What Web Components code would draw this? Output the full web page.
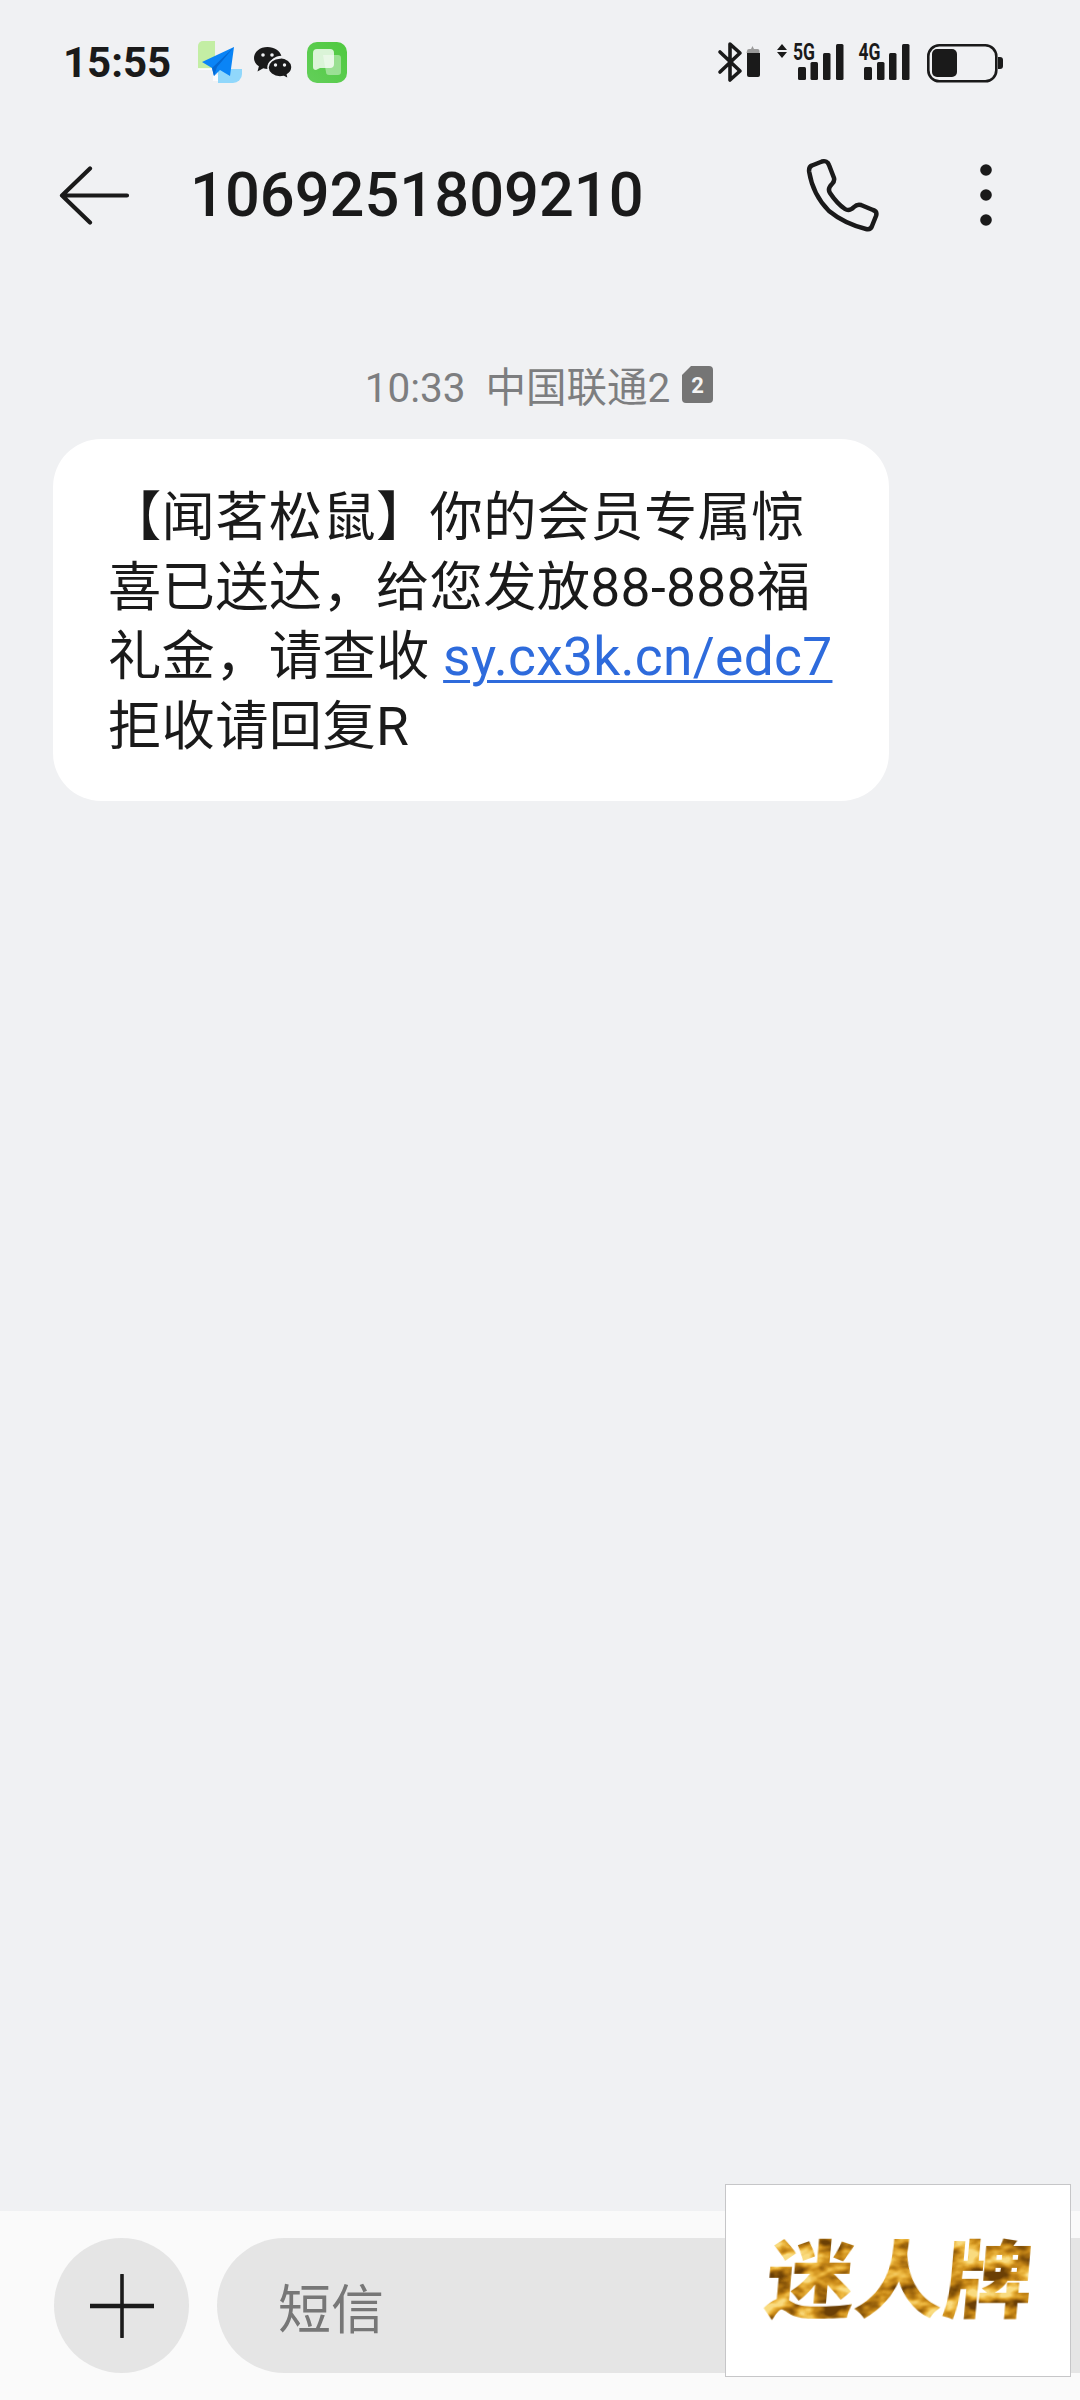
<!DOCTYPE html>
<html lang="zh-CN">
<head>
<meta charset="utf-8">
<title>短信</title>
<style>
  html, body { margin: 0; padding: 0; }
  body {
    width: 1080px;
    height: 2400px;
    overflow: hidden;
    background: #f0f1f3;
    color: #1a1a1a;
    font-family: Roboto, "Noto Sans CJK SC", sans-serif;
  }
</style>
</head>
<body>
<sms-screen>
  <status-bar slot="status" time="15:55"></status-bar>
  <app-bar slot="bar">1069251809210</app-bar>
  <sms-meta slot="thread">10:33&nbsp;&nbsp;中国联通2</sms-meta>
  <sms-bubble slot="thread">【闻茗松鼠】你的会员专属惊<br>喜已送达，给您发放88-888福<br>礼金，请查收 <sms-link>sy.cx3k.cn/edc7</sms-link><br>拒收请回复R</sms-bubble>
  <compose-bar slot="compose" placeholder="短信"></compose-bar>
  <ad-badge slot="overlay">迷人牌</ad-badge>
</sms-screen>

<script>
// page frame
class SmsScreen extends HTMLElement{
    constructor(){
        super();
        this.attachShadow({mode:'open'});
        this.shadowRoot.innerHTML = `
        <style>
            :host{ display:flex; flex-direction:column; position:relative; width:1080px; height:2400px; }
            .thread{ flex:1; display:flex; flex-direction:column; padding-top:94px; }
        </style>
        <slot name="status"></slot>
        <slot name="bar"></slot>
        <div class="thread"><slot name="thread"></slot></div>
        <slot name="compose"></slot>
        <slot name="overlay"></slot>`;
    }
}

class StatusBar extends HTMLElement{
    constructor(){
        super();
        this.attachShadow({mode:'open'});
        this.shadowRoot.innerHTML = `
        <style>
            :host{ display:flex; align-items:center; height:124px; padding:0 75px 0 63px; box-sizing:border-box; }
            .time{ font:700 42px Roboto, sans-serif; width:135px; color:#1a1a1a; }
            svg{ display:block; flex:none; }
            .plane{ margin-right:12px; }
            .wechat{ margin-right:15px; }
            .right{ margin-left:auto; }
            text{ font:700 23px Roboto, sans-serif; fill:#1a1a1a; }
        </style>
        <span class="time">${this.getAttribute('time')}</span>

        <!-- paper plane app -->
        <svg class="plane" width="44" height="42" viewBox="0 0 44 42">
            <path d="M0 5a5 5 0 015-5h12v28H0z" fill="#c3eea4"/>
            <path d="M20 28h24v5a9 9 0 01-9 9H20z" fill="#90d7fb"/>
            <path d="M0 27h15v2H0zM15 34h5v6h-5z" fill="#fff" opacity=".8"/>
            <path d="M36 6L4 21l10 6 2 8 6-6 10 6z" fill="#0a84f6"/>
            <path d="M36 6L14 27l2 8 3-9z" fill="#0568d2"/>
        </svg>

        <svg class="wechat" width="38" height="31" viewBox="0 0 38 31">
            <path d="M13.500 0C6 0 0 4.900 0 11c0 3.400 1.900 6.300 4.900 8.300L3.500 24.500l5.800-3.200c1.300.4 2.700.6 4.200.6 1 0 1.900-.1 2.800-.3-.3-1-.5-2-.5-3 0-5.500 5.300-9.800 11.600-9.800C25.900 3.700 20.300 0 13.500 0z" fill="#1a1a1a"/>
            <path d="M26 11c-6.600 0-12 4.300-12 9.500S19.400 30 26 30c1.300 0 2.600-.2 3.800-.5l4.700 2.500-1.100-4.300c2.800-1.800 4.600-4.500 4.600-7.700 0-5.200-5.400-9.500-12-9.500z" fill="#1a1a1a" stroke="#f0f1f3" stroke-width="1.500"/>
            <circle cx="9" cy="8" r="1.800" fill="#f0f1f3"/><circle cx="18" cy="8" r="1.800" fill="#f0f1f3"/>
            <circle cx="21.500" cy="18" r="1.700" fill="#f0f1f3"/><circle cx="30.500" cy="18" r="1.700" fill="#f0f1f3"/>
        </svg>

        <svg width="40" height="41" viewBox="0 0 40 41">
            <defs><linearGradient id="msg" x1="1" y1="0" x2="0" y2="1"><stop offset="0" stop-color="#4fc93f"/><stop offset="1" stop-color="#63cf5a"/></linearGradient></defs>
            <rect width="40" height="41" rx="10" fill="url(#msg)"/>
            <path d="M16 13h15a3 3 0 013 3v14a3 3 0 01-3 3h-3l-6 0a3 3 0 01-3-3z" fill="#fff" opacity=".4"/>
            <path d="M10 7h13a4 4 0 014 4v11a4 4 0 01-4 4H13l-4 2a3 3 0 01-3-3V11a4 4 0 014-4z" fill="#fff" opacity=".78"/>
        </svg>

        <svg class="right" width="290" height="44" viewBox="715 40 290 44">
            <!-- bluetooth -->
            <path d="M720 52l20 19-10 9V44l10 9-20 19" fill="none" stroke="#1a1a1a" stroke-width="3.600" stroke-linejoin="round" stroke-linecap="round"/>
            <!-- little battery of the headset -->
            <path d="M747 51a2 2 0 012-2h2l1.500-3 1.500 3h3.500a2 2 0 012 2v2h-13z" fill="#9a9a9a"/>
            <path d="M747 53h13v22a2 2 0 01-2 2h-9a2 2 0 01-2-2z" fill="#1a1a1a"/>
            <!-- data arrows -->
            <path d="M782 44l5 6h-10zM782 58l5-6h-10z" fill="#1a1a1a"/>
            <text x="793" y="59.500" textLength="22" lengthAdjust="spacingAndGlyphs">5G</text>
            <rect x="798" y="67" width="8" height="13" rx="1.500" fill="#1a1a1a"/>
            <rect x="810.500" y="62" width="7.500" height="18" rx="1.500" fill="#1a1a1a"/>
            <rect x="823" y="53" width="7.500" height="27" rx="1.500" fill="#1a1a1a"/>
            <rect x="836" y="44" width="7.500" height="36" rx="1.500" fill="#1a1a1a"/>
            <text x="858.500" y="59.500" textLength="22" lengthAdjust="spacingAndGlyphs">4G</text>
            <rect x="864" y="67" width="8" height="13" rx="1.500" fill="#1a1a1a"/>
            <rect x="877" y="62" width="7.500" height="18" rx="1.500" fill="#1a1a1a"/>
            <rect x="889" y="53" width="7.500" height="27" rx="1.500" fill="#1a1a1a"/>
            <rect x="902" y="44" width="7.500" height="36" rx="1.500" fill="#1a1a1a"/>
            <!-- battery -->
            <rect x="928.300" y="45.300" width="68" height="36" rx="11" fill="none" stroke="#1a1a1a" stroke-width="2.600"/>
            <rect x="932" y="49" width="25" height="28" rx="5" fill="#1a1a1a"/>
            <path d="M998 57h2a3 3 0 013 3v6a3 3 0 01-3 3h-2z" fill="#1a1a1a"/>
        </svg>`;
    }
}

class AppBar extends HTMLElement{
    constructor(){
        super();
        this.attachShadow({mode:'open'});
        this.shadowRoot.innerHTML = `
        <style>
            :host{ display:flex; align-items:center; height:142px; padding:0 88px 0 58px; box-sizing:border-box; }
            .title{ font:500 61.400px Roboto, sans-serif; color:#1a1a1a; margin-left:59px; }
            .phone{ margin-left:auto; margin-right:100px; }
            svg{ display:block; flex:none; }
        </style>
        <svg width="73" height="59" viewBox="0 0 73 59" fill="none" stroke="#1a1a1a" stroke-width="4.200" stroke-linecap="round" stroke-linejoin="round">
            <path d="M32 2.500L4 29.500 32 56.500M4 29.500H69"/>
        </svg>
        <div class="title"><slot></slot></div>
        <svg class="phone" width="75" height="76" viewBox="-2 -2 75 76" fill="none" stroke="#1a1a1a" stroke-width="4.500" stroke-linejoin="round">
            <path d="M15 2.500L5 6.500C2 7.500 1.800 10 2.200 13C5 30 12 42 22 52C33 61 43 66 59 70C62 70.700 64 70 65 67L69 57C70 54 69 52 66 51L54 46C51 45 49 46 47 48C44 51 41 52 38 50C32 46 27 40 23 34C21 31 22 28 25 25C27 23 27.500 21 27 19L22 6C21 3 18 1.500 15 2.500Z"/>
        </svg>
        <svg width="12" height="62" viewBox="0 0 12 62" fill="#1a1a1a">
            <circle cx="6" cy="6" r="5.800"/><circle cx="6" cy="31" r="5.800"/><circle cx="6" cy="56" r="5.800"/>
        </svg>`;
    }
}

class SmsMeta extends HTMLElement{
    constructor(){
        super();
        this.attachShadow({mode:'open'});
        this.shadowRoot.innerHTML = `
        <style>
            :host{ display:flex; justify-content:center; align-items:center; gap:12px; height:48px; padding-right:2px; font:400 40.500px Roboto, "Noto Sans CJK SC", sans-serif; color:#7d7e80; }
            svg{ display:block; }
            text{ font:700 22px Roboto, sans-serif; fill:#f4f4f4; }
        </style>
        <span><slot></slot></span>
        <svg width="31" height="37" viewBox="0 0 31 37">
            <path d="M9 0h18a4 4 0 014 4v29a4 4 0 01-4 4H4a4 4 0 01-4-4V9z" fill="#757575"/>
            <text x="15.500" y="27" text-anchor="middle">2</text>
        </svg>`;
    }
}

class SmsBubble extends HTMLElement{
    constructor(){
        super();
        this.attachShadow({mode:'open'});
        this.shadowRoot.innerHTML = `
        <style>
            :host{ display:block; box-sizing:border-box; width:836px; height:362px; margin:31px 0 0 53px; padding:45px 0 0 55px; background:#fff; border-radius:48px; font:400 53.300px/69.500px Roboto, "Noto Sans CJK SC", sans-serif; letter-spacing:.3px; color:#1a1a1a; white-space:nowrap; }
        </style>
        <slot></slot>`;
    }
}

class SmsLink extends HTMLElement{
    constructor(){
        super();
        this.attachShadow({mode:'open'});
        this.shadowRoot.innerHTML = `
        <style>
            :host{ display:inline; color:#2e6bdc; text-decoration:underline; text-decoration-thickness:3px; text-underline-offset:5px; }
        </style>
        <slot></slot>`;
    }
}

class ComposeBar extends HTMLElement{
    constructor(){
        super();
        this.attachShadow({mode:'open'});
        this.shadowRoot.innerHTML = `
        <style>
            :host{ display:flex; align-items:flex-start; gap:28px; height:189px; padding:27px 0 0 54px; box-sizing:border-box; background:#fafafa; }
            .plus{ width:135px; height:135px; border-radius:50%; background:#e5e5e5; display:flex; align-items:center; justify-content:center; flex:none; }
            .input{ flex:1; height:135px; border-radius:67.500px 0 0 67.500px; background:#e5e5e5; display:flex; align-items:center; padding-left:61px; font:400 53px "Noto Sans CJK SC", sans-serif; color:#777; }
            svg{ display:block; }
        </style>
        <div class="plus">
            <svg width="64" height="64" viewBox="0 0 64 64" stroke="#1a1a1a" stroke-linecap="round">
                <path d="M32 1V63" stroke-width="3.600"/><path d="M1 32H63" stroke-width="4.600"/>
            </svg>
        </div>
        <div class="input">${this.getAttribute('placeholder')}</div>`;
    }
}

class AdBadge extends HTMLElement{
    constructor(){
        super();
        this.attachShadow({mode:'open'});
        this.shadowRoot.innerHTML = `
        <style>
            :host{ position:absolute; left:725px; top:2184px; width:346px; height:193px; box-sizing:border-box; background:#fff; border:1.500px solid #c6c6c8; display:flex; align-items:center; justify-content:center; }
            .gold{ font:900 84px/1 "Noto Sans CJK SC", sans-serif; color:#000; filter:url(#gold); transform:translate(2px,-6px) skewX(-5deg) scaleX(1.06); white-space:nowrap; }
            svg{ position:absolute; width:0; height:0; }
        </style>
        <svg aria-hidden="true">
            <filter id="gold" x="0" y="0" width="100%" height="100%" color-interpolation-filters="sRGB">
                <feTurbulence type="fractalNoise" baseFrequency="0.04 0.06" numOctaves="3" seed="11" result="n"/>
                <feColorMatrix in="n" type="matrix" values="2.200 0 0 0 -.6  2.200 0 0 0 -.6  2.200 0 0 0 -.6  0 0 0 0 1"/>
                <feComponentTransfer>
                    <feFuncR type="table" tableValues=".42 .62 .8 .93 .98"/>
                    <feFuncG type="table" tableValues=".25 .4 .55 .72 .86"/>
                    <feFuncB type="table" tableValues=".02 .05 .1 .25 .5"/>
                </feComponentTransfer>
                <feComposite in2="SourceAlpha" operator="in"/>
            </filter>
        </svg>
        <div class="gold"><slot></slot></div>`;
    }
}

customElements.define("sms-screen", SmsScreen);
customElements.define("status-bar", StatusBar);
customElements.define("app-bar", AppBar);
customElements.define("sms-meta", SmsMeta);
customElements.define("sms-bubble", SmsBubble);
customElements.define("sms-link", SmsLink);
customElements.define("compose-bar", ComposeBar);
customElements.define("ad-badge", AdBadge);
</script>
</body>
</html>
